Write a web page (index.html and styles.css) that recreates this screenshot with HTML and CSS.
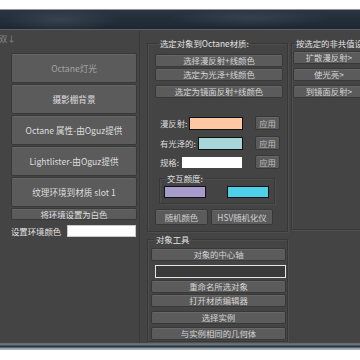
FILE: index.html
```html
<!DOCTYPE html>
<html>
<head>
<meta charset="utf-8">
<link rel="stylesheet" href="styles.css">
</head>
<body>
<div class="topgap"></div>
<div class="titlebar"></div>
<div class="panel">
  <div class="col left">
    <div class="hdr">双↓</div>
    <div class="btn big dis">Octane灯光</div>
    <div class="btn big">摄影棚背景</div>
    <div class="btn big">Octane 属性-由Oguz提供</div>
    <div class="btn big">Lightlister-由Oguz提供</div>
    <div class="btn big">纹理环境到材质 slot 1</div>
    <div class="btn thin">将环境设置为白色</div>
    <div class="envrow"><span class="lbl">设置环境颜色</span><span class="sw sw-env"></span></div>
  </div>
  <div class="col mid">
    <fieldset class="grp g1">
      <legend>选定对象到Octane材质:</legend>
      <div class="btn sm b1">选择漫反射+线颜色</div>
      <div class="btn sm b2">选定为光泽+线颜色</div>
      <div class="btn sm b3">选定为镜面反射+线颜色</div>
      <div class="crow r1"><span class="lbl">漫反射:</span><span class="sw peach"></span><span class="btn apply">应用</span></div>
      <div class="crow r2"><span class="lbl">有光泽的:</span><span class="sw cyan"></span><span class="btn apply">应用</span></div>
      <div class="crow r3"><span class="lbl">规格:</span><span class="sw white"></span><span class="btn apply">应用</span></div>
      <fieldset class="grp sub">
        <legend>交互颜度:</legend>
        <div class="pair"><span class="sw lav"></span><span class="sw aqua"></span></div>
      </fieldset>
      <div class="rand"><span class="btn rb1">随机颜色</span><span class="btn rb2">HSV随机化仪</span></div>
    </fieldset>
    <fieldset class="grp g2">
      <legend>对象工具</legend>
      <div class="btn sm t1">对象的中心轴</div>
      <div class="field"></div>
      <div class="btn sm t2">重命名所选对象</div>
      <div class="btn sm t3">打开材质编辑器</div>
      <div class="btn sm t4">选择实例</div>
      <div class="btn sm t5">与实例相同的几何体</div>
    </fieldset>
  </div>
  <div class="col right">
    <fieldset class="grp g3">
      <legend>按选定的非共值设</legend>
      <div class="btn sm q1">扩散漫反射&gt;</div>
      <div class="btn sm q2">使光亮&gt;</div>
      <div class="btn sm q3">到镜面反射&gt;</div>
    </fieldset>
  </div>
</div>
<div class="bottombar"></div>
</body>
</html>
```
FILE: styles.css
```css
* { box-sizing: border-box; }
html, body { margin: 0; padding: 0; background: #ffffff; }
body {
  width: 360px; height: 360px; overflow: hidden;
  font-family: "Noto Sans CJK SC", "Noto Sans", sans-serif;
  font-size: 8.4px; line-height: 11px; color: #dcdcdc;
}
.topgap { height: 9px; background: #ffffff; }
.titlebar {
  height: 21px;
  border-top: 1px solid #8f979e;
  background:
    radial-gradient(ellipse 60px 12px at 60px 10px, rgba(90,105,120,0.35), rgba(0,0,0,0)),
    radial-gradient(ellipse 80px 10px at 250px 8px, rgba(90,105,120,0.30), rgba(0,0,0,0)),
    linear-gradient(#2a3541, #1e2731);
  border-bottom: 1px solid #5c636a;
}
.panel {
  height: 313px;
  background: #444444;
  display: flex;
  overflow: hidden;
}
.col { height: 100%; }
.left {
  width: 140px; flex: none;
  padding-left: 11px;
  border-right: 1px solid #3a3a3a;
  display: flex; flex-direction: column;
}
.hdr {
  height: 23px; margin-left: -12px; padding-top: 3px;
  color: #8a8a8a;
}
.btn {
  background: #5b5b5b;
  border: 1px solid #383838;
  border-radius: 2px;
  color: #dedede;
  text-align: center;
  white-space: nowrap;
  display: flex; align-items: center; justify-content: center;
  box-shadow: inset 0 1px 0 #666666;
}
.big { width: 126px; height: 30px; margin-bottom: 1px; font-size: 8.6px; }
.dis { color: #a2a2a2; }
.thin { width: 126px; height: 12px; }
.envrow { display: flex; align-items: center; margin-top: 5px; height: 12px; }
.envrow .lbl { width: 56px; color: #e4e4e4; }
.sw { display: block; height: 12px; border: 1px solid #111111; }
.sw-env { width: 69px; background: #ffffff; border-color: #c8c8c8; }

.mid { width: 148px; flex: none; padding-left: 7px; }
.grp {
  margin: 0; padding: 0;
  border: 1px solid #383838;
  box-shadow: 1px 1px 0 #4e4e4e, inset 1px 1px 0 #4e4e4e;
  min-width: 0;
}
.grp legend { padding: 0 2px 0 2px; margin-left: 3px; color: #e2e2e2; line-height: 11px; }
.g1 { width: 141px; margin-top: 8px; padding: 0 4px 4px 7px; height: 194px; }
.sm { height: 13px; color: #d4d4d4; }
.b1 { margin-top: 5px; }
.b2 { margin-top: 1px; }
.b3 { margin-top: 4px; }
.crow { display: flex; align-items: center; height: 14px; padding-left: 5px; padding-right: 3px; }
.r1 { margin-top: 18px; }
.r2 { margin-top: 6px; }
.r3 { margin-top: 5px; }
.crow .lbl { color: #dcdcdc; }
.crow .sw { flex: 1; margin-left: 2px; height: 13px; }
.apply { width: 25px; height: 14px; margin-left: 12px; color: #bdbdbd; }
.peach { background: #ffc8a2; }
.cyan { background: #a6d6da; }
.white { background: #ffffff; border-color: #444; }
.sub { margin: 4px 8px 0 4px; padding: 0 5px 4px 4px; height: 31px; }
.sub legend { margin-left: 1px; }
.pair { display: flex; justify-content: space-between; margin-top: 2px; }
.pair .sw { width: 42px; height: 12px; }
.lav { background: #a89ccc; }
.aqua { background: #4ed0ea; }
.rand { display: flex; margin-top: 5px; }
.rb1 { width: 53px; height: 16px; color: #d0d0d0; }
.rb2 { width: 62px; height: 16px; margin-left: 3px; color: #d0d0d0; }

.g2 { width: 141px; margin-top: 2px; padding: 0 1px 3px 3px; height: 108px; }
.t1 { margin-top: 3px; }
.field { height: 13px; margin: 4px 0 2px 4px; border: 1px solid #e6e6e6; background: #3a3a3a; }
.t2 { margin-top: 1px; }
.t3 { margin-top: 1px; }
.t4 { margin-top: 4px; }
.t5 { margin-top: 3px; }

.right { flex: 1; padding-left: 3px; }
.g3 { width: 100px; margin-top: 8px; padding: 0 0 4px 1px; height: 192px; }
.g3 legend { margin-left: 1px; }
.q1 { width: 72px; margin-top: 2px; }
.q2 { width: 72px; margin-top: 4px; }
.q3 { width: 72px; margin-top: 4px; }

.bottombar {
  height: 7px;
  background: linear-gradient(#5d6a74 0, #6b7780 2px, #2d343b 3px, #2d343b 4px, #8e979e 5px, #b8bec2 7px);
}
```
